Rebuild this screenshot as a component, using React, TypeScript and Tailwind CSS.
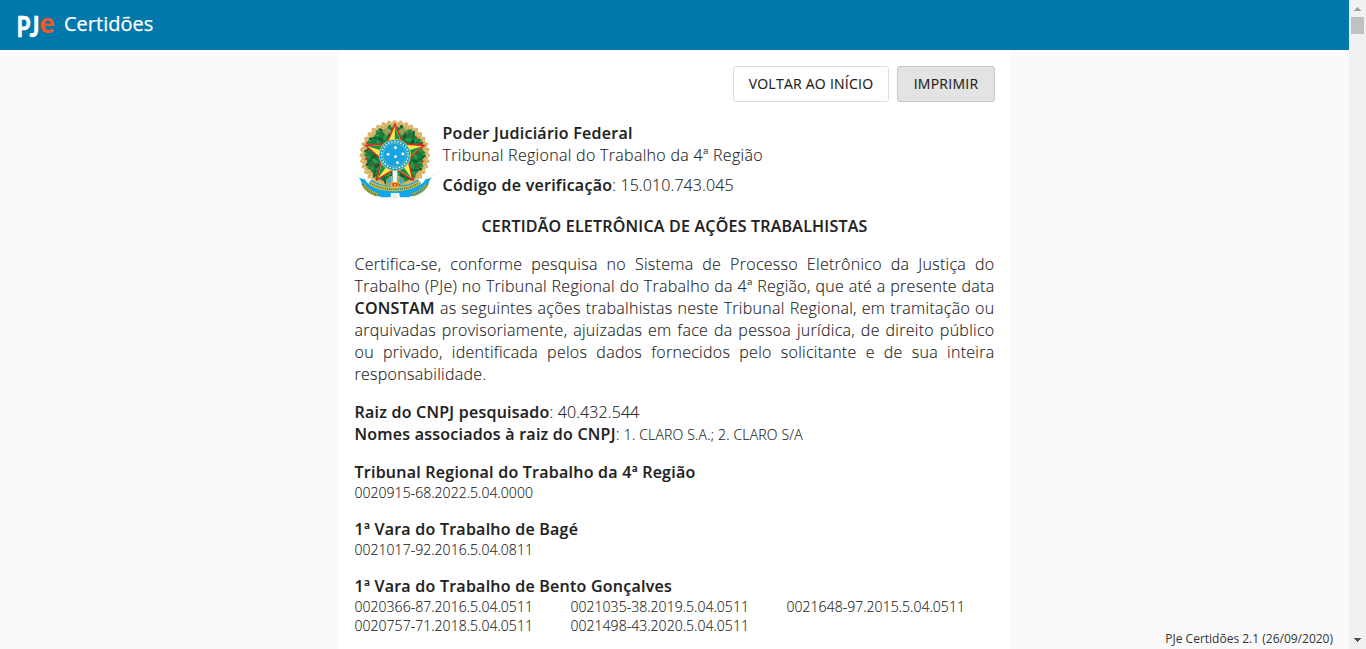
import React from "react";

type Court = { name: string; cases: string[] };

const courts: Court[] = [
  { name: "Tribunal Regional do Trabalho da 4ª Região", cases: ["0020915-68.2022.5.04.0000"] },
  { name: "1ª Vara do Trabalho de Bagé", cases: ["0021017-92.2016.5.04.0811"] },
  {
    name: "1ª Vara do Trabalho de Bento Gonçalves",
    cases: [
      "0020366-87.2016.5.04.0511",
      "0021035-38.2019.5.04.0511",
      "0021648-97.2015.5.04.0511",
      "0020757-71.2018.5.04.0511",
      "0021498-43.2020.5.04.0511",
    ],
  },
];

const CX = 133;
const CY = 120;

function point(angle: number, r: number, cx = CX, cy = CY) {
  const a = (angle * Math.PI) / 180;
  return [cx + r * Math.sin(a), cy - r * Math.cos(a)];
}

function star(outer: number, inner: number) {
  return Array.from({ length: 10 }, (_, i) => point(i * 36, i % 2 ? inner : outer).join(",")).join(" ");
}

function Emblem() {
  const rays = Array.from({ length: 72 }, (_, i) => point(i * 5, i % 2 ? 99 : 107, CX, 121).join(",")).join(" ");
  const leaves = Array.from({ length: 26 }, (_, i) => 16 + i * 13.2);
  const facets = Array.from({ length: 5 }, (_, i) => i * 72);
  const dots = Array.from({ length: 27 }, (_, i) => point((i * 360) / 27, 40));
  return (
    <svg viewBox="13.5 12 240 240" className="block h-20 w-20 shrink-0" aria-hidden="true">
      <polygon points={rays} fill="#d8b263" />
      <circle cx={CX} cy={121} r="97" fill="none" stroke="#ecd49a" strokeWidth="4" strokeDasharray="4 7" />
      <circle cx={CX} cy={121} r="66" fill="none" stroke="#1b7a3c" strokeWidth="38" />
      {leaves.map((a, i) => (
        <g key={a} transform={`rotate(${a} ${CX} ${CY})`}>
          <ellipse cx={CX} cy={CY - 80} rx="5" ry="14" fill={i % 2 ? "#178b3e" : "#0d6433"} transform={`rotate(${i % 2 ? 40 : -30} ${CX} ${CY - 80})`} />
          <ellipse cx={CX} cy={CY - 62} rx="5" ry="13" fill={i % 2 ? "#0f5f2d" : "#2b9a4e"} transform={`rotate(${i % 2 ? -35 : 50} ${CX} ${CY - 62})`} />
          <path d={`M${CX - 5} ${CY - 83}l7 10`} stroke="#5ba860" strokeWidth="2" />
        </g>
      ))}
      <path d="M100 37q16 3 24 13l-16 12q-10-8-14-20zM166 37q-16 3-24 13l14 10q12-8 16-18z" fill="#d9b96c" opacity="0.65" />
      {[[47, 131], [66, 151], [50, 84], [197, 68], [211, 86], [216, 139], [199, 153], [165, 54]].map(([x, y]) => (
        <circle key={`${x}-${y}`} cx={x} cy={y} r="3.5" fill="#b93630" />
      ))}
      <path d="M126 165h15v70h-15z" fill="#eef3f5" stroke="#8fa4ae" strokeWidth="1.5" />
      <path d="M108 207q1-20 16-23l-3 23zM143 184q16 3 17 23h-13z" fill="#2ba9db" stroke="#d6b64c" strokeWidth="3" />
      <polygon points={star(96, 43)} fill="#dc2929" stroke="#dc2929" strokeWidth="2" strokeLinejoin="round" />
      <polygon points={star(86, 39)} fill="#ffe84a" />
      {facets.map((a) => {
        const tip = point(a, 85);
        const side = point(a + 36, 38);
        return <polygon key={a} points={`${CX},${CY} ${tip.join(",")} ${side.join(",")}`} fill="#179443" />;
      })}
      <circle cx={CX} cy={CY} r="48" fill="#e8ca42" />
      <circle cx={CX} cy={CY} r="45.5" fill="#19a4df" />
      {dots.map(([x, y], i) => <circle key={i} cx={x} cy={y} r="2.4" fill="#fff" />)}
      <circle cx={CX} cy={CY} r="35" fill="#16a5e2" stroke="#c9bf5a" strokeWidth="1.5" />
      {[[135, 98], [113, 118], [135, 125], [157, 117], [141, 143]].map(([x, y]) => (
        <circle key={`${x}-${y}`} cx={x} cy={y} r="4.3" fill="#fff" />
      ))}
      <path d="M16 178q9 14 26 14 16 26 46 33l34 6-2 16-28 0-8-4-9 1q-36-14-42-40-3-14-17-26z" fill="#10a6e9" />
      <path d="M252 178q-9 14-26 14-16 26-46 33l-34 6 2 16 26 0 8-4 9 1q38-14 44-40 3-14 17-26z" fill="#10a6e9" />
      <path d="M37 207q13 25 47 33M230 207q-13 25-48 33" fill="none" stroke="#b9ac35" strokeWidth="10" />
      <path d="M37 207q13 25 47 33M230 207q-13 25-48 33" fill="none" stroke="#216f7b" strokeWidth="5" strokeDasharray="3 4" />
      <path d="M56 203q30 20 77 21 49-1 76-22" fill="none" stroke="#10a6e9" strokeWidth="21" />
      <path d="M58 204q29 18 75 19 47-1 74-20" fill="none" stroke="#ddc441" strokeWidth="12" />
      <path d="M60 205q28 17 73 18 46-1 72-19" fill="none" stroke="#42724b" strokeWidth="6" strokeDasharray="3 3" />
      <path d="M124 202h19v14h-19z" fill="#e33b2c" stroke="#f5cd37" strokeWidth="3" />
      <circle cx="133.5" cy="209" r="3" fill="#ffdf3b" />
      <path d="M127 235h13v5h-13z" fill="#fff" />
      <circle cx="133.5" cy="245" r="5" fill="#f4f4f4" stroke="#b7b7b7" strokeWidth="2" strokeDasharray="3 2" />
    </svg>
  );
}

function Logo() {
  return (
    <svg viewBox="-1 -10 41 46" className="h-[46px] w-[41px] font-['Lato',sans-serif] font-black" role="img" aria-label="PJe">
      <text x="-0.5" y="24.5" fontSize="29" textLength="14" lengthAdjust="spacingAndGlyphs" fill="#fff" stroke="#fff" strokeWidth="0.3">P</text>
      <text x="12.5" y="24.5" fontSize="29" textLength="10" lengthAdjust="spacingAndGlyphs" fill="#fff" stroke="#fff" strokeWidth="0.3">J</text>
      <text x="22.5" y="20.5" fontSize="28" textLength="15" lengthAdjust="spacingAndGlyphs" fill="#f05a22">e</text>
    </svg>
  );
}

export default function App() {
  return (
    <div className="flex h-[649px] w-[1366px] overflow-hidden bg-[#fafafa] font-['Open_Sans',sans-serif] text-[#212121]">
      <div className="relative flex min-w-0 flex-1 flex-col">
        <header className="flex h-[50px] shrink-0 items-center bg-[#0078aa] pl-4 text-white">
          <Logo />
          <h1 className="ml-[7px] pb-0.5 text-[20px] leading-7 font-normal [-webkit-text-stroke:0.25px]">Certidões</h1>
        </header>

        <main className="mx-auto min-h-0 w-[672px] flex-1 bg-white p-4 text-[16px] leading-[22px] font-light [-webkit-text-stroke:0.12px]">
          <div className="flex justify-end gap-2 text-[14px] font-normal tracking-[0.25px]">
            <button className="h-9 w-[156px] rounded-[3px] border border-[#dedede] bg-white pl-px">VOLTAR AO INÍCIO</button>
            <button className="h-9 w-[98px] rounded-[3px] border border-[#c6c6c6] bg-[#e3e3e3] pl-px">IMPRIMIR</button>
          </div>

          <div className="mt-[17px] flex gap-2">
            <Emblem />
            <div className="pt-[3px]">
              <p className="font-semibold tracking-[0.27px]">Poder Judiciário Federal</p>
              <p className="tracking-[0.3px]">Tribunal Regional do Trabalho da 4ª Região</p>
              <p className="mt-2"><b className="font-semibold tracking-[0.27px]">Código de verificação</b><span className="tracking-[0.1px]">: 15.010.743.045</span></p>
            </div>
          </div>

          <h2 className="mt-4 text-center font-semibold tracking-[0.23px]">CERTIDÃO ELETRÔNICA DE AÇÕES TRABALHISTAS</h2>

          <p className="mt-4 text-justify tracking-[0.28px]">
            Certifica-se, conforme pesquisa no Sistema de Processo Eletrônico da Justiça do Trabalho (PJe) no Tribunal
            Regional do Trabalho da 4ª Região, que até a presente data <b className="font-semibold">CONSTAM</b> as
            seguintes ações trabalhistas neste Tribunal Regional, em tramitação ou arquivadas provisoriamente, ajuizadas
            em face da pessoa jurídica, de direito público ou&nbsp;privado, identificada pelos dados fornecidos pelo
            solicitante e de sua inteira responsabilidade.
          </p>

          <div className="mt-4">
            <p><b className="font-semibold tracking-[0.24px]">Raiz do CNPJ pesquisado</b><span className="tracking-[0.1px]">: 40.432.544</span></p>
            <p>
              <b className="font-semibold tracking-[0.24px]">Nomes associados à raiz do CNPJ</b>:{" "}
              <span className="text-[14px] leading-none tracking-[0.18px]">1. CLARO S.A.; 2. CLARO S/A</span>
            </p>
          </div>

          {courts.map((court) => (
            <section key={court.name} className="mt-4">
              <h3 className="font-semibold tracking-[0.25px]">{court.name}</h3>
              <ul className="grid grid-cols-3 gap-x-2 text-[14px] leading-[19px] tracking-[0.03px]">
                {court.cases.map((item) => <li key={item}>{item}</li>)}
              </ul>
            </section>
          ))}
        </main>

        <footer className="absolute right-4 bottom-[2px] text-[12px] leading-4 text-[#333]">PJe Certidões 2.1 (26/09/2020)</footer>
      </div>

      <div className="flex w-[17px] shrink-0 flex-col items-center bg-[#f1f1f1]">
        <svg viewBox="0 0 17 17" className="h-[17px] w-[17px]" shapeRendering="crispEdges"><path d="M5 11h7v-1H5zM6 10h5V9H6zM7 9h3V8H7zM8 8h1V7H8z" fill="#a3a3a3" /></svg>
        <div className="h-[17px] w-[13px] bg-[#c1c1c1]" />
        <svg viewBox="0 0 17 17" className="mt-auto h-[17px] w-[17px]" shapeRendering="crispEdges"><path d="M5 6h7v1H5zM6 7h5v1H6zM7 8h3v1H7zM8 9h1v1H8z" fill="#505050" /></svg>
      </div>
    </div>
  );
}
